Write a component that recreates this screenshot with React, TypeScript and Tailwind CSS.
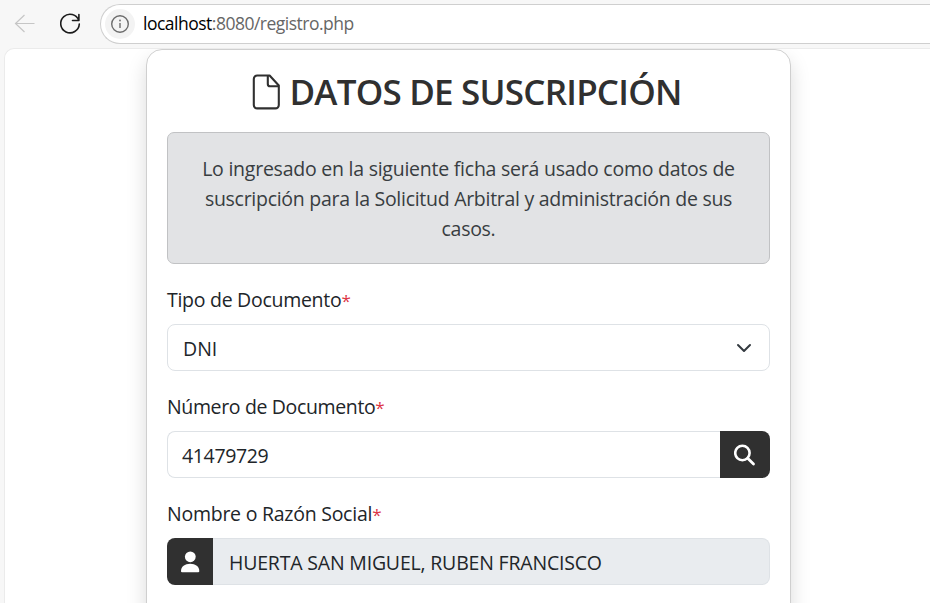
import type { ReactNode } from "react";

function Label({ children, className = "" }: { children: ReactNode; className?: string }) {
  return (
    <label className="mb-[9px] block h-[30px] whitespace-nowrap leading-[30px]">
      <span className={className}>{children}</span>
      <span className="text-[17px] text-[#dc3545]">*</span>
    </label>
  );
}

function BrowserBar() {
  return (
    <header className="flex h-12 items-start pt-1">
      <div className="flex h-10 w-[100px] shrink-0 items-center">
        <svg className="ml-[14px]" width="22" height="22" viewBox="0 0 22 22" fill="none" stroke="#c6c6c6" strokeWidth="1.2">
          <path d="M20.500 10.500H1.500M10.500 2L1.500 10.500L10.500 19" />
        </svg>
        <svg className="ml-[22px]" width="24" height="24" viewBox="0 0 24 24" fill="none" stroke="#1b1b1b" strokeWidth="1.6">
          <path d="M20.800 8.500A9.300 9.300 0 1 0 21.300 12M20.900 2.600V8.500H14.500" strokeLinecap="round" strokeLinejoin="round" />
        </svg>
      </div>
      <div className="flex h-10 flex-1 items-center rounded-l-full border border-r-0 border-[#cfcfcf] bg-white pl-1">
        <div className="flex size-[30px] items-center justify-center rounded-full bg-[#f3f3f3]">
          <svg width="20" height="20" viewBox="0 0 20 20" fill="none" stroke="#6c6c6c" strokeWidth="1.4">
            <circle cx="10" cy="10" r="8.300" />
            <path d="M10 9v5" />
            <circle cx="10" cy="6.500" r="0.900" fill="#6c6c6c" stroke="none" />
          </svg>
        </div>
        <span className="ml-2 pb-px text-[17.500px] tracking-[-0.500px] text-[#666]">
          <span className="text-black">localhost</span>:8080/registro.php
        </span>
      </div>
    </header>
  );
}

export default function App() {
  return (
    <div className="h-[603px] overflow-hidden bg-[#f7f7f7] font-['Open_Sans','Noto_Sans',sans-serif] text-[19.500px] text-[#212529]">
      <BrowserBar />
      <div className="ml-1 h-[555px] overflow-hidden rounded-tl-[10px] border-l border-t border-[#ebebeb] bg-white pl-[141px]">
        <main className="h-[620px] w-[645px] rounded-[16px] border border-[#cfcfcf] bg-white px-5 pt-[22px] shadow-[0_10px_20px_rgba(0,0,0,0.150)]">
          <h1 className="flex h-10 items-center justify-center pr-[3px] text-[#303030]">
            <svg className="mr-2 shrink-0" width="29" height="36" viewBox="0 0 29 36" fill="none" stroke="currentColor" strokeWidth="2.1" strokeLinejoin="round">
              <path d="M5.200 1.500H17.600L26.800 11.500V31A3.400 3.400 0 0 1 23.400 34.400H5.200A3.400 3.400 0 0 1 1.800 31V4.900A3.400 3.400 0 0 1 5.200 1.500Z" />
              <path d="M15.800 1.500V10A2.300 2.300 0 0 0 18.100 12.300H26.800" />
            </svg>
            <span className="text-[35px] font-semibold leading-10 tracking-[-0.780px] whitespace-nowrap">DATOS DE SUSCRIPCIÓN</span>
          </h1>
          <div className="mt-5 h-[132px] rounded-[7px] border border-[#c1c2c4] bg-[#e2e3e5] pt-[21px] text-center leading-[30px] text-[#383d41]">
            <p className="whitespace-nowrap tracking-[-0.240px]">Lo ingresado en la siguiente ficha será usado como datos de</p>
            <p className="whitespace-nowrap tracking-[-0.280px]">suscripción para la Solicitud Arbitral y administración de sus</p>
            <p className="tracking-[-0.300px]">casos.</p>
          </div>
          <div className="mt-[21px]">
            <Label className="tracking-[-0.280px]">Tipo de Documento</Label>
            <div className="flex h-[47px] items-center justify-between rounded-[8px] border border-[#dee2e6] pl-[15px] pr-[17px]">
              <span className="pt-0.5">DNI</span>
              <svg width="16" height="16" viewBox="0 0 16 16" fill="none" stroke="#343a40" strokeWidth="2" strokeLinecap="round" strokeLinejoin="round">
                <path d="m2 5 6 6 6-6" />
              </svg>
            </div>
          </div>
          <div className="mt-[21px]">
            <Label className="tracking-[-0.360px]">Número de Documento</Label>
            <div className="flex h-[47px]">
              <div className="flex flex-1 items-center rounded-l-[8px] border border-r-0 border-[#dee2e6] pl-[14px] pt-0.5 tracking-[-0.350px]">41479729</div>
              <button className="flex w-[50px] items-center justify-center rounded-r-[8px] bg-[#303030] text-white">
                <svg width="22" height="22" viewBox="0 0 22 22" fill="none" stroke="currentColor" strokeWidth="2.600">
                  <circle cx="8.400" cy="9" r="7.200" />
                  <path d="m13.700 14.300 5.800 5.700" strokeWidth="2.800" strokeLinecap="round" />
                </svg>
              </button>
            </div>
          </div>
          <div className="mt-[21px]">
            <Label className="tracking-[-0.250px]">Nombre o Razón Social</Label>
            <div className="flex h-[47px]">
              <div className="flex w-[46px] items-center justify-center rounded-l-[8px] bg-[#303030] text-white">
                <svg width="20" height="22" viewBox="0 0 20 22" fill="currentColor">
                  <circle cx="10.300" cy="5.800" r="5.400" />
                  <path d="M1 20.200C1 15.500 4.800 12.700 10.200 12.700S19.300 15.500 19.300 20.200Q19.300 21.300 18.200 21.300H2.100Q1 21.300 1 20.200Z" />
                </svg>
              </div>
              <div className="flex flex-1 items-center rounded-r-[8px] border border-l-0 border-[#dee2e6] bg-[#e9ecef] pl-4">
                <span className="whitespace-nowrap pt-0.5 tracking-[-0.190px]">HUERTA SAN MIGUEL, RUBEN FRANCISCO</span>
              </div>
            </div>
          </div>
        </main>
      </div>
    </div>
  );
}
